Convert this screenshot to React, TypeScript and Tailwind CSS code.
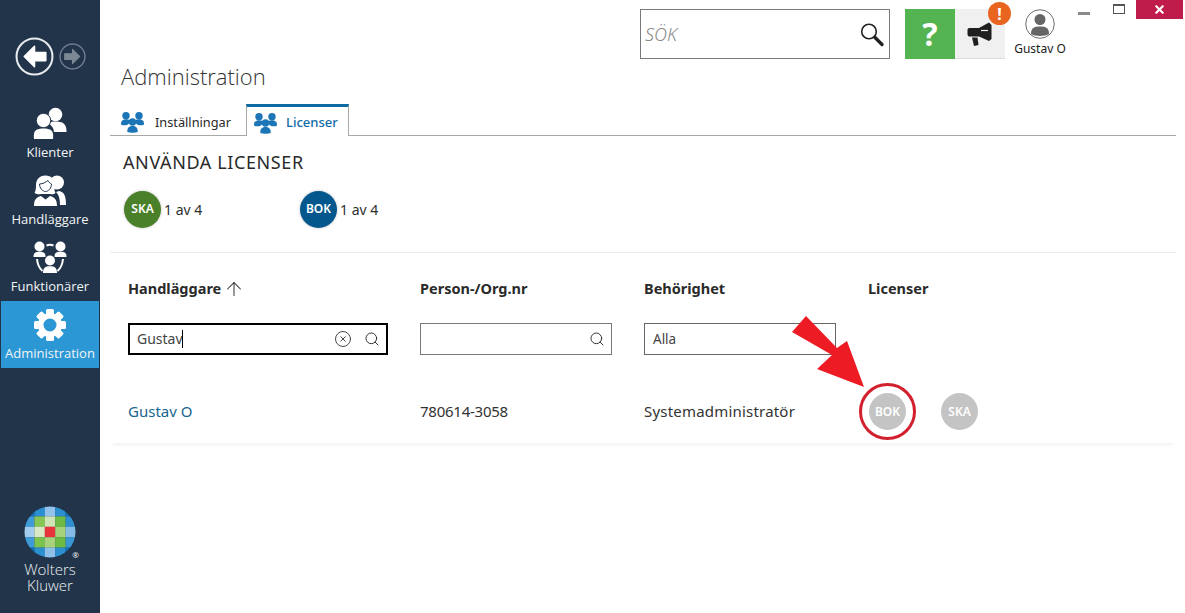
import { Search, ArrowUp, X, CircleX } from "lucide-react";

const LOGO_COLORS = [
  ["#0f6fb0", "#2b8fd0", "#93c3ea", "#2b8fd0", "#0f6fb0"],
  ["#3f9bd8", "#86c655", "#cfe5b5", "#6dbb45", "#2f8fd0"],
  ["#a3cdee", "#d9e9c6", "#e8333a", "#a5d27a", "#86bbe6"],
  ["#3f9bd8", "#7cc24e", "#a9d27e", "#6dbb45", "#3a97d6"],
  ["#0f6fb0", "#2b8fd0", "#8fc0e8", "#2b8fd0", "#0f6fb0"],
];

function Logo() {
  return (
    <svg width="52" height="52" viewBox="0 0 52 52">
      <defs>
        <clipPath id="logo-clip">
          <circle cx="26" cy="26" r="25.5" />
        </clipPath>
      </defs>
      <g clipPath="url(#logo-clip)">
        {LOGO_COLORS.map((row, y) =>
          row.map((color, x) => (
            <rect key={`${x}-${y}`} x={x * 10.4} y={y * 10.4} width="10.5" height="10.5" fill={color} />
          ))
        )}
      </g>
    </svg>
  );
}

function NavArrow({ dir, size, muted }: { dir: "left" | "right"; size: number; muted?: boolean }) {
  const path = dir === "left" ? "M19 9 L9 19 L19 29 V23 H30 V15 H19 Z" : "M19 9 L29 19 L19 29 V23 H8 V15 H19 Z";
  return (
    <svg width={size} height={size} viewBox="0 0 38 38">
      <circle cx="19" cy="19" r="17.5" fill="none" stroke={muted ? "#6f7c8b" : "#e8ebee"} strokeWidth="2" />
      <path d={path} fill={muted ? "#7d8895" : "#ffffff"} strokeLinejoin="round" stroke={muted ? "#7d8895" : "#ffffff"} strokeWidth="1.5" />
    </svg>
  );
}

function ClientsIcon() {
  return (
    <svg width="34" height="34" viewBox="0 0 34 34" fill="#fff">
      <circle cx="22.5" cy="7.5" r="6.8" />
      <path d="M15 16 C18 14 27 14 30 16 C33 18 33.5 21 33.5 25 H21 C20.5 20 18 18 15 16 Z" />
      <circle cx="10.5" cy="13.5" r="7.2" stroke="#22344a" strokeWidth="1" />
      <path d="M1 32 C0.5 27 1 24 4 22.5 C7 21 14 21 17 22.5 C20 24 20.5 27 20 32 Z" />
    </svg>
  );
}

function CaseworkerIcon() {
  return (
    <svg width="34" height="34" viewBox="0 0 34 34" fill="#fff">
      <circle cx="24" cy="8.5" r="7" />
      <path d="M26 17 C31 18 33 21 33 31 H27 C27 25 26 21 23 18 Z" />
      <path d="M12.5 1.5 C6 1.5 3 6 3 11 C3 15 2.5 17 1.5 19 C4 20.5 6 20.5 8 20 L17 20 C19 20.5 21 20.5 22.5 19 C21 16 21.5 14 21.5 10 C21.5 5 18 1.5 12.5 1.5 Z" />
      <path
        d="M6.5 10 C10 10 13 8 15 6.5 C16 8.5 17.5 9.5 18.5 10 C18.5 14 15.5 17.5 12.5 17.5 C9.5 17.5 6.5 14 6.5 10 Z"
        stroke="#22344a"
        strokeWidth="1"
      />
      <path d="M1 32 C1 26 3 23.5 8 22 L12.5 25.5 L17 22 C22 23.5 24 26 24 32 Z" />
    </svg>
  );
}

function OfficersIcon() {
  return (
    <svg width="34" height="34" viewBox="0 0 34 34" fill="#fff">
      <circle cx="6.5" cy="5.5" r="5" />
      <path d="M0.5 16 C0.5 12 2 10.8 6.5 10.8 C11 10.8 12.5 12 12.5 16 Z" />
      <circle cx="27.5" cy="5.5" r="5" />
      <path d="M21.5 16 C21.5 12 23 10.8 27.5 10.8 C32 10.8 33.5 12 33.5 16 Z" />
      <circle cx="17" cy="19.5" r="5" />
      <path d="M10 32 C10 27 12 25.2 17 25.2 C22 25.2 24 27 24 32 Z" />
      <path d="M13.5 4.5 C16 3.5 18 3.5 20.5 4.5 M4 18 C4.5 23 6.5 27.5 9.5 30 M30 18 C29.5 23 27.5 27.5 24.5 30" fill="none" stroke="#fff" strokeWidth="2" />
    </svg>
  );
}

function GearIcon() {
  const teeth = [0, 45, 90, 135, 180, 225, 270, 315];
  return (
    <svg width="34" height="34" viewBox="0 0 34 34" fill="#fff">
      {teeth.map((deg) => (
        <rect key={deg} x="13" y="1" width="8" height="8" rx="1.5" transform={`rotate(${deg} 17 17)`} />
      ))}
      <path
        fillRule="evenodd"
        d="M17 5 A12 12 0 1 1 17 29 A12 12 0 1 1 17 5 Z M17 10.5 A6.5 6.5 0 1 0 17 23.5 A6.5 6.5 0 1 0 17 10.5 Z"
      />
    </svg>
  );
}

function TeamIcon() {
  return (
    <svg width="23" height="21" viewBox="0 0 23 21" fill="#1b75b6">
      <circle cx="5" cy="3.8" r="3.7" />
      <path d="M0 12.5 C-0.3 8.5 2 7.2 5 7.2 C8 7.2 9.5 8.5 10 10 L6 13 C3.5 13.5 1.5 13.5 0 12.5 Z" />
      <circle cx="18" cy="3.8" r="3.7" />
      <path d="M23 12.5 C23.3 8.5 21 7.2 18 7.2 C15 7.2 13.5 8.5 13 10 L17 13 C19.5 13.5 21.5 13.5 23 12.5 Z" />
      <circle cx="11.5" cy="10" r="3.7" />
      <path d="M6.3 20 C6 15.5 8.5 14 11.5 14 C14.5 14 17 15.5 16.7 20 C14 21 9 21 6.3 20 Z" />
    </svg>
  );
}

function NavItem({ icon, label, active }: { icon: React.ReactNode; label: string; active?: boolean }) {
  return (
    <div
      className={`flex h-[67px] w-[98px] flex-col items-center ${active ? "ml-[1px] self-start bg-[#2b97d4] pt-[7px]" : "pt-[7px]"}`}
    >
      {icon}
      <span className="mt-[2px] text-[13px] leading-[18px] text-[#f2f4f6]">{label}</span>
    </div>
  );
}

function LicenseBadge({ label, color, shadow }: { label: string; color: string; shadow?: boolean }) {
  return (
    <div
      className={`flex h-[37px] w-[37px] items-center justify-center rounded-full text-[12px] font-semibold text-white ${shadow ? "shadow-[0_0_3px_rgba(0,0,0,0.25)]" : ""}`}
      style={{ backgroundColor: color }}
    >
      {label}
    </div>
  );
}

function ColumnHeader({ children }: { children: React.ReactNode }) {
  return <div className="flex h-[24px] items-center gap-[2px] text-[14.5px] font-bold text-[#2a2a2a]">{children}</div>;
}

export default function App() {
  return (
    <div className="flex h-[613px] w-[1185px] overflow-hidden bg-white font-['Noto_Sans',sans-serif] text-[#2f2f2f]">
      {/* Sidebar */}
      <aside className="flex w-[100px] shrink-0 flex-col items-center bg-[#22344a] font-['Open_Sans',sans-serif]">
        <div className="mt-[37px] flex items-center gap-[5px]">
          <NavArrow dir="left" size={39} />
          <NavArrow dir="right" size={27} muted />
        </div>
        <div className="mt-[24px] flex w-full flex-col items-center">
          <NavItem icon={<ClientsIcon />} label="Klienter" />
          <NavItem icon={<CaseworkerIcon />} label="Handläggare" />
          <NavItem icon={<OfficersIcon />} label="Funktionärer" />
          <NavItem icon={<GearIcon />} label="Administration" active />
        </div>
        <div className="mt-auto mb-[20px] flex flex-col items-center">
          <div className="relative">
            <Logo />
            <span className="absolute right-[-3px] bottom-[-1px] text-[8px] leading-none text-white">®</span>
          </div>
          <span className="mt-[3px] text-center text-[15px] leading-[16px] font-light text-[#eef1f3]">
            Wolters
            <br />
            Kluwer
          </span>
        </div>
      </aside>

      {/* Main */}
      <main className="relative flex min-w-0 flex-1 flex-col">
        <header className="flex h-[60px] justify-end pr-[2px]">
          <div className="mt-[9px] flex h-[50px] w-[250px] items-center justify-between border border-[#77797c] pr-[4px] pl-[4px]">
            <span className="text-[18px] font-light text-[#8a8a8a] italic">SÖK</span>
            <svg width="26" height="26" viewBox="0 0 26 26" fill="none" className="mt-[2px]">
              <circle cx="10" cy="9.5" r="7.3" stroke="#222" strokeWidth="1.6" />
              <path d="M16 15.5 L23 22.5" stroke="#222" strokeWidth="3.4" strokeLinecap="round" />
            </svg>
          </div>
          <div className="mt-[9px] ml-[15px] flex h-[50px] w-[50px] items-center justify-center bg-[#54b451] text-[32px] font-bold text-white">
            ?
          </div>
          <div className="relative mt-[9px] flex h-[50px] w-[50px] items-center justify-center border-b border-[#dcdcdc] bg-[#f0f0f0]">
            <svg width="26" height="26" viewBox="0 0 26 26" fill="#1f1f1f">
              <path d="M0.5 9 C0.5 7.5 1.5 7 3 7 L12 7 L22 1.5 L24.5 4 L24.5 18 L22 20 L12 15.5 L3 15.5 C1.5 15.5 0.5 15 0.5 13 Z" />
              <path d="M5 16.5 L10.5 16.5 L11.5 24 L7 25 Z" />
              <path d="M14 9.5 L21 9.5" stroke="#f0f0f0" strokeWidth="1.2" />
            </svg>
            <span className="absolute top-[-7px] right-[-6px] flex h-[23px] w-[23px] items-center justify-center rounded-full bg-[#e8641f] text-[16px] font-bold text-white">
              !
            </span>
          </div>
          <div className="mt-[9px] ml-[10px] flex w-[50px] flex-col items-center">
            <svg width="30" height="30" viewBox="0 0 30 30">
              <circle cx="15" cy="15" r="14.3" fill="none" stroke="#6d6d6d" strokeWidth="1" />
              <circle cx="15" cy="10.5" r="5.5" fill="#666" />
              <path d="M6 25 C6 19 9 17.5 15 17.5 C21 17.5 24 19 24 25 C21 27.5 9 27.5 6 25 Z" fill="#666" />
            </svg>
            <span className="mt-[1px] text-[12px] leading-[18px] whitespace-nowrap text-[#222]">Gustav O</span>
          </div>
          <div className="ml-[13px] flex h-[19px] items-start">
            <span className="mt-[12px] h-[3px] w-[12px] bg-[#8a8a8a]" />
            <span className="mt-[4px] ml-[23px] h-[10px] w-[12px] border border-t-2 border-[#555]" />
            <span className="ml-[11px] flex h-[19px] w-[47px] items-center justify-center bg-[#bf1b4b] text-white">
              <X size={13} strokeWidth={4} />
            </span>
          </div>
        </header>

        <h1 className="mt-[2px] ml-[21px] font-['Open_Sans',sans-serif] text-[22px] leading-[28px] font-light text-[#333]">
          Administration
        </h1>

        {/* Tabs */}
        <div className="mt-[14px] mr-[9px] ml-[10px] flex h-[32px] border-b border-[#a8a8a8]">
          <div className="flex h-[31px] w-[136px] items-center pt-[6px] pl-[11px] text-[12.75px] text-[#2a2a2a]">
            <TeamIcon />
            <span className="ml-[11px]">Inställningar</span>
          </div>
          <div className="flex h-[32px] w-[103px] items-center border-x border-t-[3px] border-x-[#a8a8a8] border-t-[#0d6aa3] bg-white pt-[3px] pl-[7px] text-[13px] font-medium text-[#0e6ca8]">
            <TeamIcon />
            <span className="ml-[9px]">Licenser</span>
          </div>
        </div>

        <h2 className="mt-[14px] ml-[23px] text-[18px] leading-[24px] tracking-[0.6px] text-[#2a2a2a]">ANVÄNDA LICENSER</h2>

        <div className="mt-[16px] ml-[24px] flex h-[38px] items-center">
          <div className="flex w-[176px] items-center gap-[3px]">
            <LicenseBadge label="SKA" color="#4a8029" shadow />
            <span className="text-[14px]">1 av 4</span>
          </div>
          <div className="flex items-center gap-[3px]">
            <LicenseBadge label="BOK" color="#04578c" shadow />
            <span className="text-[14px]">1 av 4</span>
          </div>
        </div>

        {/* Table */}
        <section className="mt-[24px] mr-[9px] ml-[10px] h-[191px] border-t border-[#ececec] pl-[18px] shadow-[0_5px_4px_-3px_rgba(0,0,0,0.06)]">
          <div className="grid grid-cols-[292px_224px_224px_1fr]">
            <div className="mt-[24px]">
              <ColumnHeader>
                Handläggare <ArrowUp size={22} strokeWidth={1.1} className="text-[#333]" />
              </ColumnHeader>
            </div>
            <div className="mt-[24px]">
              <ColumnHeader>Person-/Org.nr</ColumnHeader>
            </div>
            <div className="mt-[24px]">
              <ColumnHeader>Behörighet</ColumnHeader>
            </div>
            <div className="mt-[24px]">
              <ColumnHeader>Licenser</ColumnHeader>
            </div>

            <div className="mt-[22px] flex h-[32px] w-[260px] items-center border-2 border-black pr-[6px] pl-[7px] text-[14px] leading-[18px] text-[#444]">
              <span>Gustav</span>
              <span className="ml-[-1px] h-[18px] w-px bg-black" />
              <CircleX size={18} strokeWidth={1.3} className="mr-[12px] ml-auto" />
              <Search size={16} strokeWidth={1.5} className="text-[#333]" />
            </div>
            <div className="mt-[22px] flex h-[32px] w-[192px] items-center justify-end border border-[#7a7a7a] pr-[6px]">
              <Search size={16} strokeWidth={1.5} className="text-[#333]" />
            </div>
            <div className="mt-[22px] flex h-[32px] w-[192px] items-center border border-[#666] pl-[8px] text-[13.5px] text-[#444]">
              Alla
            </div>
            <div />

            <div className="mt-[45px] flex h-[22px] items-center text-[15px] text-[#17668f]">Gustav O</div>
            <div className="mt-[45px] flex h-[22px] items-center text-[15px] tracking-[-0.25px] text-[#333]">780614-3058</div>
            <div className="mt-[45px] flex h-[22px] items-center text-[15px] tracking-[0.2px] text-[#333]">Systemadministratör</div>
            <div className="mt-[38px] ml-[1px] flex items-start gap-[35px]">
              <div className="relative">
                <LicenseBadge label="BOK" color="#c4c4c4" />
                <span className="absolute top-[-10px] left-[-10px] h-[57px] w-[57px] rounded-full border-[3px] border-[#d2202e]" />
              </div>
              <LicenseBadge label="SKA" color="#c4c4c4" />
            </div>
          </div>
        </section>

        {/* Annotation arrow */}
        <svg className="absolute top-[315px] left-[690px]" width="76" height="74" viewBox="0 0 76 74">
          <polygon points="2,17 16,1 47,33 57,26 74,72 27,54 42,40" fill="#ed1c24" />
        </svg>
      </main>
    </div>
  );
}
